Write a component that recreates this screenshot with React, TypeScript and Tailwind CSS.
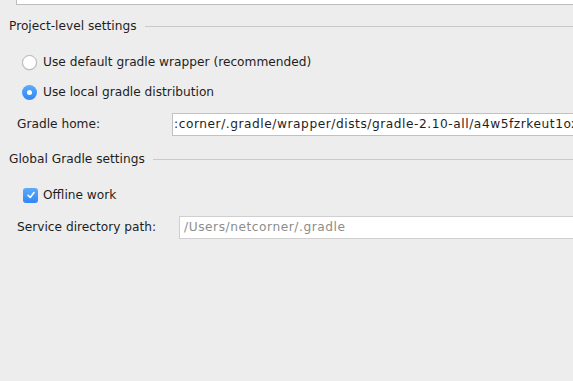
const font = { fontFamily: '"DejaVu Sans", "Liberation Sans", sans-serif' };

function SectionHeader({ title }: { title: string }) {
  return (
    <div className="flex items-center h-4 pl-[9px]">
      <span className="text-[12.2px] text-[#1e1e1e] whitespace-nowrap">{title}</span>
      <div className="flex-1 h-px bg-[#c9c9c9] ml-2" />
    </div>
  );
}

function Radio({ checked, label }: { checked?: boolean; label: string }) {
  return (
    <div className="flex items-center h-[30px] pl-[22px]">
      {checked ? (
        <span className="w-[15px] h-[15px] rounded-full bg-gradient-to-b from-[#5cabfb] to-[#2f86f5] flex items-center justify-center">
          <span className="w-[5px] h-[5px] rounded-full bg-white" />
        </span>
      ) : (
        <span className="w-[15px] h-[15px] rounded-full bg-white border border-[#b4b4b4] shadow-[0_0.5px_1px_rgba(0,0,0,0.12)]" />
      )}
      <span className="ml-[6px] text-[12.2px] text-[#1e1e1e] whitespace-nowrap">{label}</span>
    </div>
  );
}

export default function App() {
  return (
    <div className="w-[573px] h-[381px] bg-[#ededed] overflow-hidden" style={font}>
      <div className="ml-4 h-[5px] border-l border-b border-[#bdbdbd] bg-white" />
      <div className="mt-[13px]">
        <SectionHeader title="Project-level settings" />
      </div>
      <div className="mt-[13px]">
        <Radio label="Use default gradle wrapper (recommended)" />
        <Radio checked label="Use local gradle distribution" />
      </div>
      <div className="flex items-center h-[34px] pl-[17px]">
        <span className="w-[155px] text-[12.2px] text-[#1e1e1e] whitespace-nowrap">Gradle home:</span>
        <div className="flex-1 h-[23px] bg-white border border-[#c1c1c1] border-r-0 flex items-center pl-[1px] overflow-hidden">
          <span className="text-[12.2px] tracking-[0.55px] text-[#1e1e1e] whitespace-nowrap">
            :corner/.gradle/wrapper/dists/gradle-2.10-all/a4w5fzrkeut1ox
          </span>
        </div>
      </div>
      <div className="mt-[10px]">
        <SectionHeader title="Global Gradle settings" />
      </div>
      <div className="flex items-center h-[30px] pl-[23px] mt-[13px]">
        <span className="w-[15px] h-[15px] rounded-[3px] bg-gradient-to-b from-[#5cabfb] to-[#2f86f5] flex items-center justify-center">
          <svg width="10" height="10" viewBox="0 0 10 10">
            <path d="M2 5.2 L4.2 7.4 L8 2.6" fill="none" stroke="white" strokeWidth="1.6" strokeLinecap="round" strokeLinejoin="round" />
          </svg>
        </span>
        <span className="ml-[5px] text-[12.2px] text-[#1e1e1e] whitespace-nowrap">Offline work</span>
      </div>
      <div className="flex items-center h-[34px] pl-[17px]">
        <span className="w-[162px] text-[12.2px] text-[#1e1e1e] whitespace-nowrap">Service directory path:</span>
        <div className="flex-1 h-[23px] bg-white border border-[#cfcfcf] border-r-0 flex items-center pl-[4px] overflow-hidden">
          <span className="text-[12.2px] tracking-[0.55px] text-[#8c8c8c] whitespace-nowrap">/Users/netcorner/.gradle</span>
        </div>
      </div>
    </div>
  );
}
